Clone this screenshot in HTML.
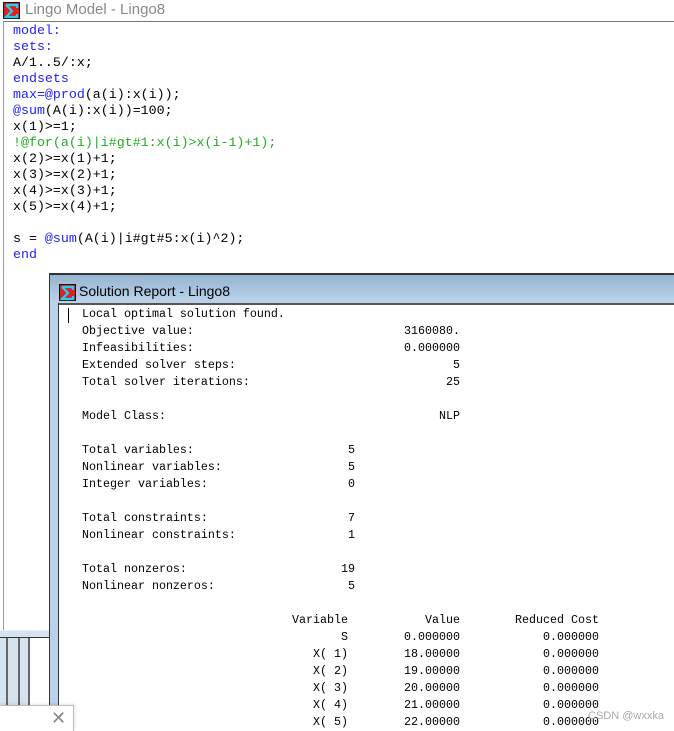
<!DOCTYPE html>
<html><head><meta charset="utf-8"><style>
body{margin:0;width:674px;height:730px;overflow:hidden;background:#fff;position:relative;font-family:"Liberation Sans",sans-serif}
.a{position:absolute}
.ed{font-family:"Liberation Mono",monospace;font-size:13.3px;line-height:16px;white-space:pre;color:#000;left:13px;top:23px}
.b{color:#2020ff}.g{color:#22aa22}
.sr{font-family:"Liberation Mono",monospace;font-size:11.67px;color:#000;white-space:pre}
.r{position:absolute;height:17px;line-height:17px;left:0;width:674px}
.r span{position:absolute}
.n{text-align:right}
</style></head><body>
<div class="a" style="left:0;top:0;width:674px;height:21px;background:#fff"></div>
<svg class="a" style="left:3px;top:2px" width="17" height="17"><rect width="17" height="17" fill="#111"/><rect x="1" y="1" width="15" height="15" fill="#e02020"/><path d="M3 3h11v3M3 3l6 6-6 6h11v-3" stroke="#20d0f0" stroke-width="2.2" fill="none"/></svg>
<div class="a" style="left:25px;top:1px;font-size:15px;color:#888">Lingo Model - Lingo8</div>
<div class="a" style="left:3px;top:21px;width:671px;height:1px;background:#777"></div>
<div class="a" style="left:3px;top:21px;width:1px;height:609px;background:#999"></div>
<div class="a ed"><span class="b">model:</span>
<span class="b">sets:</span>
A/1..5/:x;
<span class="b">endsets</span>
<span class="b">max=@prod</span>(a(i):x(i));
<span class="b">@sum</span>(A(i):x(i))=100;
x(1)&gt;=1;
<span class="g">!@for(a(i)|i#gt#1:x(i)&gt;x(i-1)+1);</span>
x(2)&gt;=x(1)+1;
x(3)&gt;=x(2)+1;
x(4)&gt;=x(3)+1;
x(5)&gt;=x(4)+1;

s = <span class="b">@sum</span>(A(i)|i#gt#5:x(i)^2);
<span class="b">end</span></div>
<div class="a" style="left:0;top:630px;width:50px;height:7px;background:#d5e3f1;border-top:1px solid #eef"></div>
<div class="a" style="left:0;top:637px;width:50px;height:1px;background:#333"></div>
<div class="a" style="left:0;top:638px;width:6px;height:70px;background:#d5e3f1"></div>
<div class="a" style="left:6px;top:638px;width:2px;height:70px;background:#666"></div>
<div class="a" style="left:8px;top:638px;width:10px;height:70px;background:#d5e3f1"></div>
<div class="a" style="left:18px;top:638px;width:2px;height:70px;background:#666"></div>
<div class="a" style="left:20px;top:638px;width:8px;height:70px;background:#d5e3f1"></div>
<div class="a" style="left:28px;top:638px;width:2px;height:70px;background:#666"></div>
<div class="a" style="left:49px;top:273px;width:625px;height:2px;background:#333"></div>
<div class="a" style="left:49px;top:273px;width:1px;height:432px;background:#333"></div>
<div class="a" style="left:50px;top:275px;width:624px;height:29px;background:linear-gradient(#96b3d0,#bcd5ec)"></div>
<div class="a" style="left:50px;top:304px;width:8px;height:426px;background:#b9d1ea"></div>
<div class="a" style="left:58px;top:303px;width:616px;height:2px;background:#555"></div>
<div class="a" style="left:58px;top:303px;width:1px;height:427px;background:#333"></div>
<svg class="a" style="left:59px;top:284px" width="17" height="17"><rect width="17" height="17" fill="#111"/><rect x="1" y="1" width="15" height="15" fill="#e02020"/><path d="M3 3h11v3M3 3l6 6-6 6h11v-3" stroke="#20d0f0" stroke-width="2.2" fill="none"/></svg>
<div class="a" style="left:79px;top:283px;font-size:14px;color:#000">Solution Report - Lingo8</div>
<div class="a" style="left:68px;top:308px;width:1px;height:15px;background:#000"></div>
<div class="a sr" style="left:0;top:306px;width:674px;height:424px">
<div class="r" style="top:0"><span style="left:82px">Local optimal solution found.</span></div>
<div class="r" style="top:17px"><span style="left:82px">Objective value:</span><span class="n" style="right:214px">3160080.</span></div>
<div class="r" style="top:34px"><span style="left:82px">Infeasibilities:</span><span class="n" style="right:214px">0.000000</span></div>
<div class="r" style="top:51px"><span style="left:82px">Extended solver steps:</span><span class="n" style="right:214px">5</span></div>
<div class="r" style="top:68px"><span style="left:82px">Total solver iterations:</span><span class="n" style="right:214px">25</span></div>
<div class="r" style="top:102px"><span style="left:82px">Model Class:</span><span class="n" style="right:214px">NLP</span></div>
<div class="r" style="top:136px"><span style="left:82px">Total variables:</span><span class="n" style="right:319px">5</span></div>
<div class="r" style="top:153px"><span style="left:82px">Nonlinear variables:</span><span class="n" style="right:319px">5</span></div>
<div class="r" style="top:170px"><span style="left:82px">Integer variables:</span><span class="n" style="right:319px">0</span></div>
<div class="r" style="top:204px"><span style="left:82px">Total constraints:</span><span class="n" style="right:319px">7</span></div>
<div class="r" style="top:221px"><span style="left:82px">Nonlinear constraints:</span><span class="n" style="right:319px">1</span></div>
<div class="r" style="top:255px"><span style="left:82px">Total nonzeros:</span><span class="n" style="right:319px">19</span></div>
<div class="r" style="top:272px"><span style="left:82px">Nonlinear nonzeros:</span><span class="n" style="right:319px">5</span></div>
<div class="r" style="top:306px"><span class="n" style="right:326px">Variable</span><span class="n" style="right:214px">Value</span><span class="n" style="right:75px">Reduced Cost</span></div>
<div class="r" style="top:323px"><span class="n" style="right:326px">S</span><span class="n" style="right:214px">0.000000</span><span class="n" style="right:75px">0.000000</span></div>
<div class="r" style="top:340px"><span class="n" style="right:326px">X( 1)</span><span class="n" style="right:214px">18.00000</span><span class="n" style="right:75px">0.000000</span></div>
<div class="r" style="top:357px"><span class="n" style="right:326px">X( 2)</span><span class="n" style="right:214px">19.00000</span><span class="n" style="right:75px">0.000000</span></div>
<div class="r" style="top:374px"><span class="n" style="right:326px">X( 3)</span><span class="n" style="right:214px">20.00000</span><span class="n" style="right:75px">0.000000</span></div>
<div class="r" style="top:391px"><span class="n" style="right:326px">X( 4)</span><span class="n" style="right:214px">21.00000</span><span class="n" style="right:75px">0.000000</span></div>
<div class="r" style="top:408px"><span class="n" style="right:326px">X( 5)</span><span class="n" style="right:214px">22.00000</span><span class="n" style="right:75px">0.000000</span></div>
</div>
<div class="a" style="left:588px;top:710px;font-size:11px;color:#aaa">CSDN @wxxka</div>
<div class="a" style="left:0;top:705px;width:73px;height:25px;background:#fff;border-top:1px solid #bbb;border-right:1px solid #bbb;box-shadow:1px -1px 3px rgba(0,0,0,.1)"></div>
<div class="a" style="left:51px;top:708px;font-size:18px;color:#888;line-height:20px">✕</div>
</body></html>
